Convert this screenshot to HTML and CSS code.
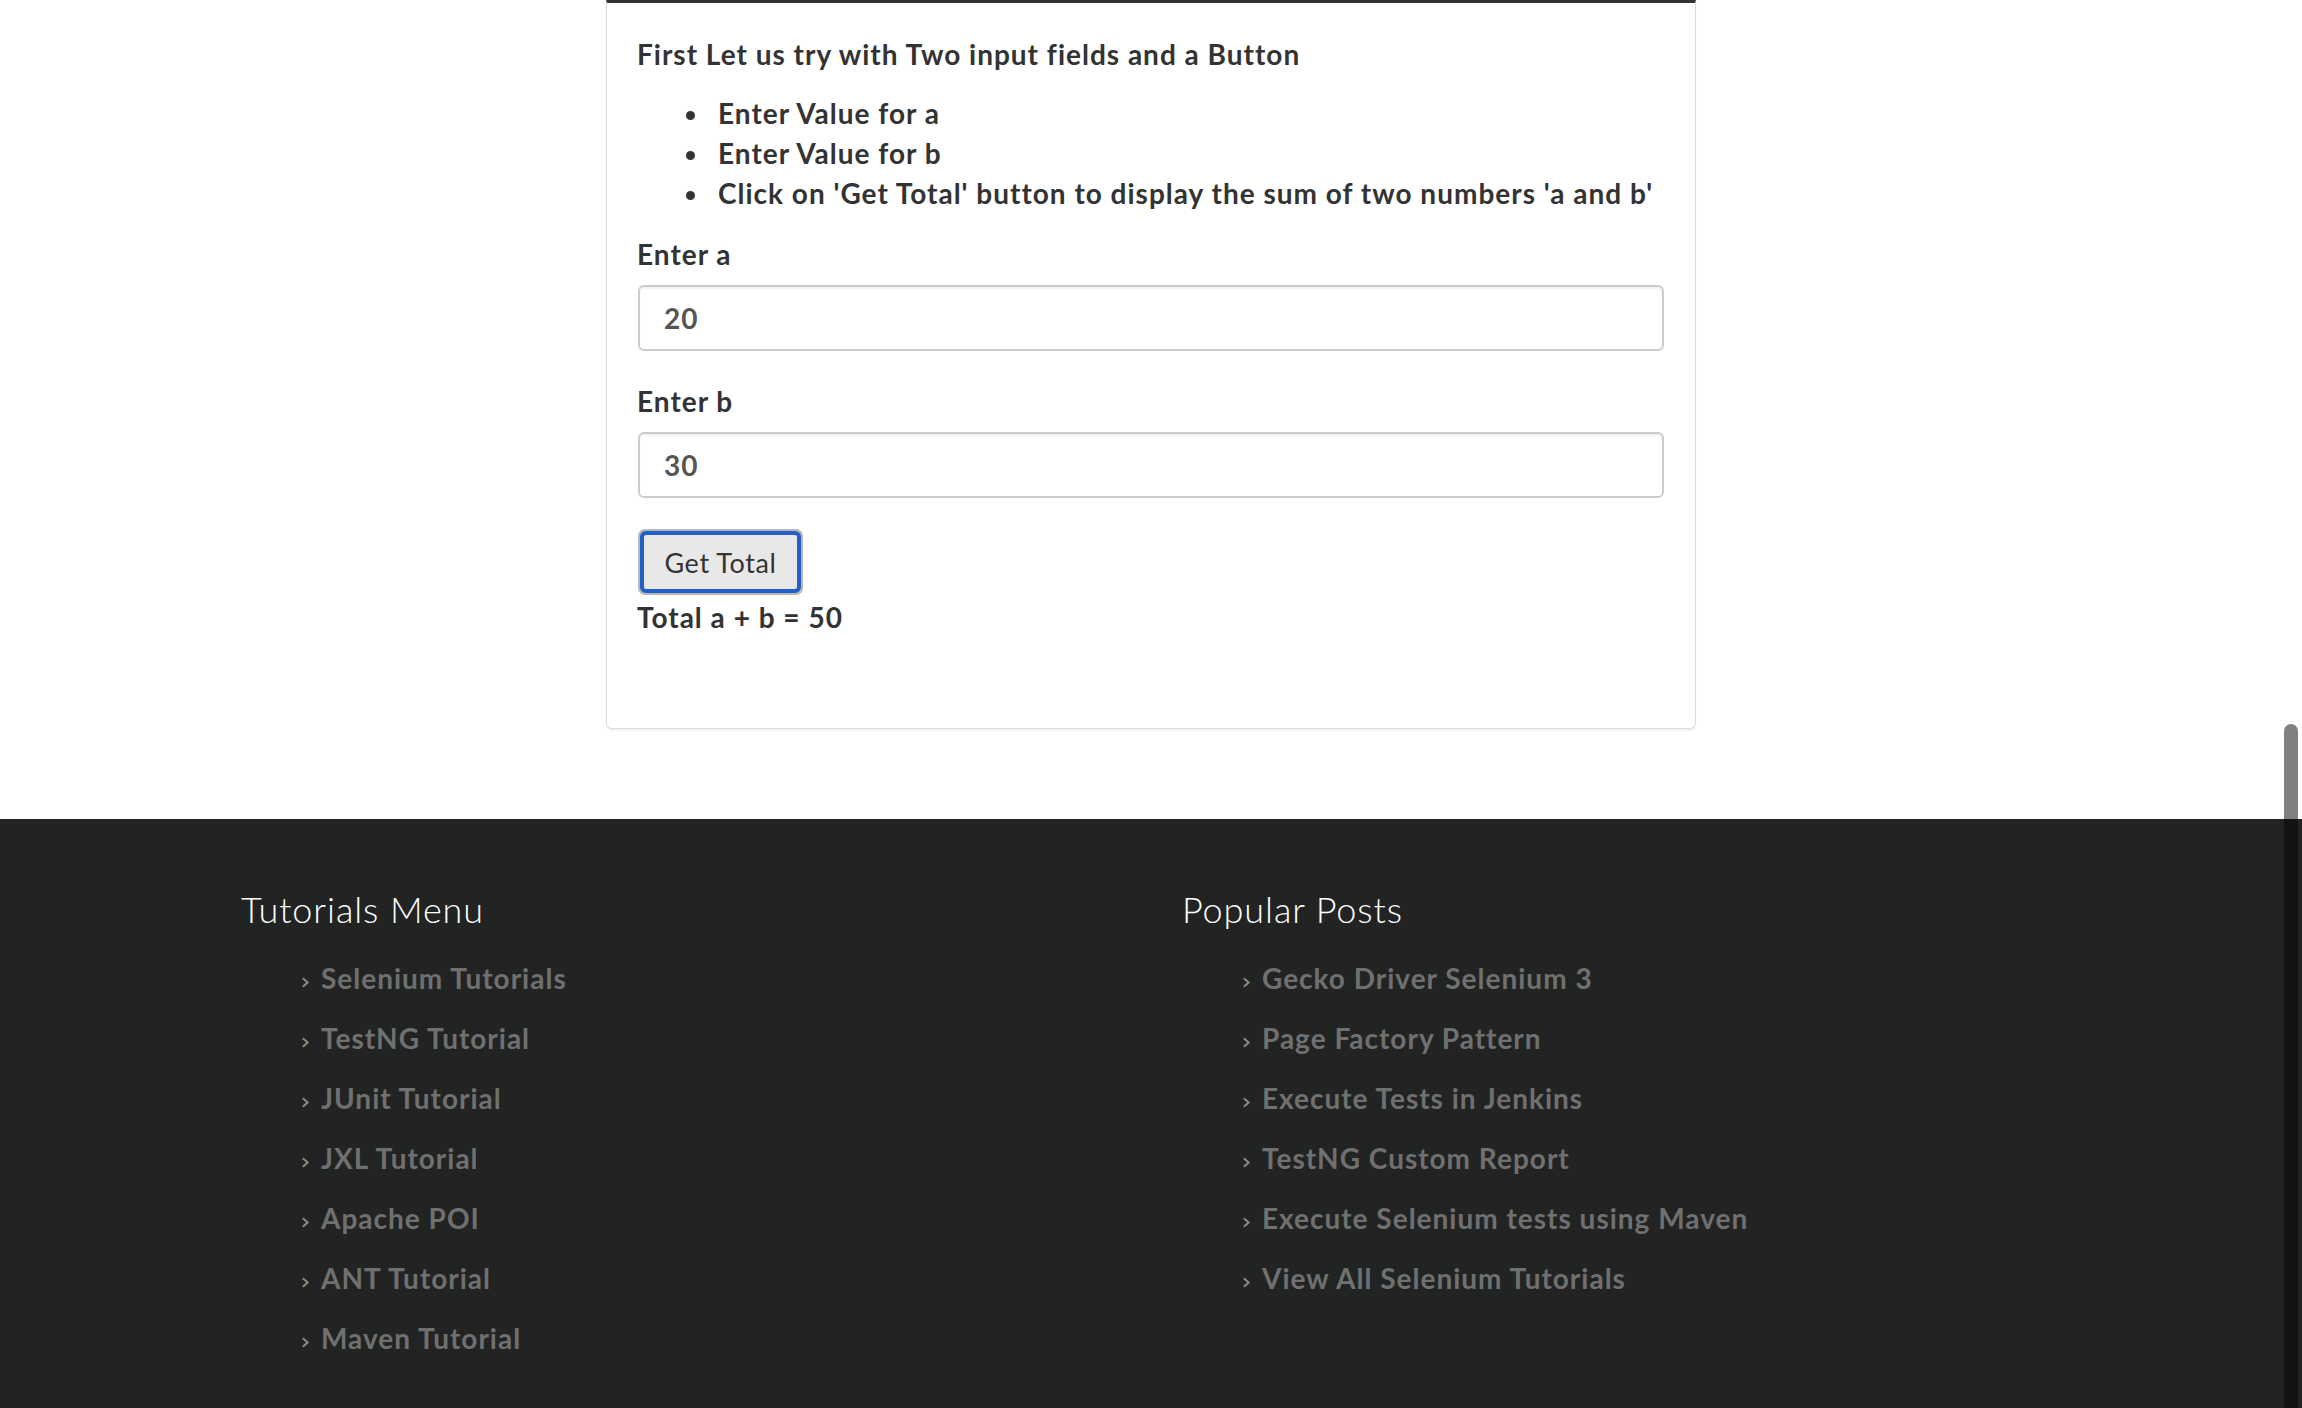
FILE: index.html
```html
<!DOCTYPE html>
<html lang="en">
<head>
<meta charset="utf-8">
<title>Two input fields</title>
<link rel="stylesheet" href="styles.css">
</head>
<body>
<main class="page">
  <section class="card">
    <p class="intro">First Let us try with Two input fields and a Button</p>
    <ul class="steps">
      <li>Enter Value for a</li>
      <li>Enter Value for b</li>
      <li>Click on 'Get Total' button to display the sum of two numbers 'a and b'</li>
    </ul>
    <label class="field-label" for="sum1">Enter a</label>
    <input class="field" id="sum1" type="text" value="20">
    <label class="field-label second" for="sum2">Enter b</label>
    <input class="field" id="sum2" type="text" value="30">
    <div class="actions">
      <button class="btn" type="button">Get Total</button>
    </div>
    <p class="total">Total a + b = 50</p>
  </section>
</main>
<footer class="footer">
  <div class="footer-grid">
    <div class="footer-col">
      <h3 class="footer-title">Tutorials Menu</h3>
      <ul class="links">
        <li><svg class="chev" viewBox="0 0 7 10"><path d="M1.2 0.4 L6.4 5 L1.2 9.6 L0 8.2 L3.6 5 L0 1.8 Z"/></svg><a href="#">Selenium Tutorials</a></li>
        <li><svg class="chev" viewBox="0 0 7 10"><path d="M1.2 0.4 L6.4 5 L1.2 9.6 L0 8.2 L3.6 5 L0 1.8 Z"/></svg><a href="#">TestNG Tutorial</a></li>
        <li><svg class="chev" viewBox="0 0 7 10"><path d="M1.2 0.4 L6.4 5 L1.2 9.6 L0 8.2 L3.6 5 L0 1.8 Z"/></svg><a href="#">JUnit Tutorial</a></li>
        <li><svg class="chev" viewBox="0 0 7 10"><path d="M1.2 0.4 L6.4 5 L1.2 9.6 L0 8.2 L3.6 5 L0 1.8 Z"/></svg><a href="#">JXL Tutorial</a></li>
        <li><svg class="chev" viewBox="0 0 7 10"><path d="M1.2 0.4 L6.4 5 L1.2 9.6 L0 8.2 L3.6 5 L0 1.8 Z"/></svg><a href="#">Apache POI</a></li>
        <li><svg class="chev" viewBox="0 0 7 10"><path d="M1.2 0.4 L6.4 5 L1.2 9.6 L0 8.2 L3.6 5 L0 1.8 Z"/></svg><a href="#">ANT Tutorial</a></li>
        <li><svg class="chev" viewBox="0 0 7 10"><path d="M1.2 0.4 L6.4 5 L1.2 9.6 L0 8.2 L3.6 5 L0 1.8 Z"/></svg><a href="#">Maven Tutorial</a></li>
      </ul>
    </div>
    <div class="footer-col">
      <h3 class="footer-title">Popular Posts</h3>
      <ul class="links">
        <li><svg class="chev" viewBox="0 0 7 10"><path d="M1.2 0.4 L6.4 5 L1.2 9.6 L0 8.2 L3.6 5 L0 1.8 Z"/></svg><a href="#">Gecko Driver Selenium 3</a></li>
        <li><svg class="chev" viewBox="0 0 7 10"><path d="M1.2 0.4 L6.4 5 L1.2 9.6 L0 8.2 L3.6 5 L0 1.8 Z"/></svg><a href="#">Page Factory Pattern</a></li>
        <li><svg class="chev" viewBox="0 0 7 10"><path d="M1.2 0.4 L6.4 5 L1.2 9.6 L0 8.2 L3.6 5 L0 1.8 Z"/></svg><a href="#">Execute Tests in Jenkins</a></li>
        <li><svg class="chev" viewBox="0 0 7 10"><path d="M1.2 0.4 L6.4 5 L1.2 9.6 L0 8.2 L3.6 5 L0 1.8 Z"/></svg><a href="#">TestNG Custom Report</a></li>
        <li><svg class="chev" viewBox="0 0 7 10"><path d="M1.2 0.4 L6.4 5 L1.2 9.6 L0 8.2 L3.6 5 L0 1.8 Z"/></svg><a href="#">Execute Selenium tests using Maven</a></li>
        <li><svg class="chev" viewBox="0 0 7 10"><path d="M1.2 0.4 L6.4 5 L1.2 9.6 L0 8.2 L3.6 5 L0 1.8 Z"/></svg><a href="#">View All Selenium Tutorials</a></li>
      </ul>
    </div>
  </div>
</footer>
<div class="scroll-thumb"></div>
</body>
</html>
```

FILE: styles.css
```css
html, body {
  margin: 0;
  padding: 0;
  height: 1408px;
  overflow: hidden;
  background: #ffffff;
}

body {
  font-family: "Lato", "Noto Sans", sans-serif;
  color: #333333;
  font-size: 28px;
  letter-spacing: 1px;
}

.page {
  display: flex;
  justify-content: center;
  height: 819px;
}

.card {
  box-sizing: border-box;
  width: 1090px;
  height: 729px;
  border: 1px solid #dcdcdc;
  border-top: 3px solid #333333;
  border-radius: 0 0 6px 6px;
  box-shadow: 0 2px 2px rgba(0, 0, 0, 0.06);
  padding: 31px 31px 0 30px;
  display: flex;
  flex-direction: column;
  align-items: flex-start;
}

.intro {
  margin: 0;
  line-height: 40px;
  font-weight: 700;
}

.steps {
  margin: 19px 0 0 0;
  padding-left: 74px;
  line-height: 40px;
  font-weight: 700;
}

.steps li {
  padding-left: 7px;
}

.field-label {
  margin-top: 21px;
  line-height: 40px;
  font-weight: 700;
}

.field-label.second {
  margin-top: 30px;
}

.field {
  box-sizing: border-box;
  align-self: stretch;
  margin: 11px 0 0 1px;
  height: 66px;
  border: 2px solid #cccccc;
  border-radius: 6px;
  box-shadow: inset 0 2px 2px rgba(0, 0, 0, 0.06);
  padding: 0 24px;
  font-family: inherit;
  font-size: 28px;
  letter-spacing: 1px;
  font-weight: 700;
  color: #555555;
  background: #ffffff;
  outline: none;
}

.field + .field-label {
  margin-top: 30px;
}

.actions {
  margin-top: 31px;
  margin-left: 1px;
  padding: 2px;
  border-radius: 7px;
  background: #b8b8b8;
  display: flex;
}

.btn {
  box-sizing: border-box;
  width: 161px;
  height: 62px;
  border: 4px solid #2160c8;
  border-radius: 6px;
  background: #e8e8e8;
  font-family: inherit;
  font-size: 27px;
  letter-spacing: 0.6px;
  font-weight: 400;
  color: #333333;
  padding: 0;
}

.total {
  margin: 2px 0 0 0;
  line-height: 40px;
  font-weight: 700;
}

.footer {
  background: #222423;
  height: 589px;
  box-sizing: border-box;
  padding-top: 70px;
}

.footer-grid {
  display: grid;
  grid-template-columns: 941px 941px;
  padding-left: 241px;
}

.footer-title {
  margin: 0;
  font-size: 36px;
  letter-spacing: 0.9px;
  line-height: 40px;
  font-weight: 300;
  color: #ffffff;
}

.links {
  list-style: none;
  margin: 19px 0 0 0;
  padding: 0 0 0 61px;
}

.links li {
  display: flex;
  align-items: center;
  height: 60px;
}

.chev {
  width: 8px;
  height: 11px;
  fill: #8c8a7e;
  margin: 8px 11px 0 0;
  flex: none;
}

.links a {
  color: #707070;
  text-decoration: none;
  font-size: 28px;
  letter-spacing: 1px;
  font-weight: 700;
}

.scroll-thumb {
  position: fixed;
  top: 724px;
  bottom: 0;
  right: 4px;
  width: 14px;
  border-radius: 7px 7px 0 0;
  background: linear-gradient(to bottom, #808080 0, #808080 95px, #131313 95px, #131313 100%);
}
```
